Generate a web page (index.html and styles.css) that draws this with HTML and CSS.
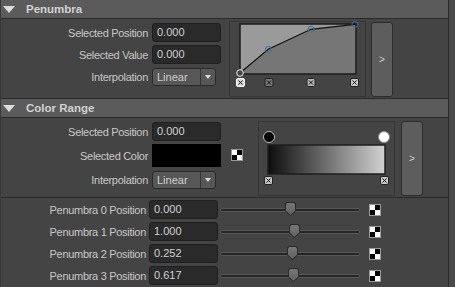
FILE: index.html
```html
<!DOCTYPE html>
<html lang="en">
<head>
    <meta charset="UTF-8">
    <title>Penumbra</title>
    <link rel="stylesheet" href="styles.css">
</head>
<body>
<div class="panel">
    <div class="sec-head"><span class="tri"></span>Penumbra</div>
    <div class="sec-body">
        <div class="fields">
            <div class="row"><span class="label">Selected Position</span><span class="field">0.000</span></div>
            <div class="row"><span class="label">Selected Value</span><span class="field">0.000</span></div>
            <div class="row"><span class="label">Interpolation</span><span class="combo">Linear<span class="arrow"></span></span></div>
        </div>
        <div class="frame frame-curve">
            <svg width="137" height="76" viewBox="0 0 137 76">
                <rect x="0.5" y="0.5" width="136" height="75" fill="none" stroke="#363636"/>
                <rect x="11" y="3" width="116" height="50" fill="#767676"/>
                <polygon points="11,3 11,52 39.3,28.3 82,8.3 126,3.3 126,3" fill="#9a9a9a"/>
                <rect x="11" y="3" width="116" height="50" fill="none" stroke="#1c1c1c" stroke-width="1.5"/>
                <polyline points="11,52 39.3,28.3 82,8.3 126,3.3" fill="none" stroke="#111" stroke-width="1.2"/>
                <circle cx="11" cy="52" r="3.3" fill="#444" stroke="#eee"/>
                <circle cx="39.3" cy="28.3" r="3" fill="none" stroke="#3e6d9c"/>
                <circle cx="82" cy="8.3" r="3" fill="none" stroke="#3e6d9c"/>
                <circle cx="126" cy="3.3" r="3" fill="none" stroke="#3e6d9c"/>
                <g stroke-width="1">
                    <rect x="7.5" y="57.5" width="8" height="8" rx="1.5" fill="#d8d8d8" stroke="#fff"/>
                    <path d="M9.5 59.5l4 4M13.5 59.5l-4 4" stroke="#111"/>
                    <rect x="36" y="57.5" width="8" height="8" rx="1.5" fill="#777" stroke="#222"/>
                    <path d="M38 59.5l4 4M42 59.5l-4 4" stroke="#111"/>
                    <rect x="78" y="57.5" width="8" height="8" rx="1.5" fill="#b5b5b5" stroke="#222"/>
                    <path d="M80 59.5l4 4M84 59.5l-4 4" stroke="#111"/>
                    <rect x="121.5" y="57.5" width="8" height="8" rx="1.5" fill="#c8c8c8" stroke="#222"/>
                    <path d="M123.5 59.5l4 4M127.5 59.5l-4 4" stroke="#111"/>
                </g>
            </svg>
        </div>
        <div class="more more-curve">&gt;</div>
    </div>

    <div class="sec-head"><span class="tri"></span>Color Range</div>
    <div class="sec-body">
        <div class="fields">
            <div class="row"><span class="label">Selected Position</span><span class="field">0.000</span></div>
            <div class="row row-tall"><span class="label">Selected Color</span><span class="swatch"></span><span class="checker checker-color"></span></div>
            <div class="row"><span class="label">Interpolation</span><span class="combo">Linear<span class="arrow"></span></span></div>
        </div>
        <div class="frame frame-ramp">
            <svg width="137" height="75" viewBox="0 0 137 75">
                <defs>
                    <linearGradient id="ramp" x1="0" x2="1" y1="0" y2="0">
                        <stop offset="0" stop-color="#0d0d0d"/>
                        <stop offset="1" stop-color="#d2d2d2"/>
                    </linearGradient>
                </defs>
                <rect x="0.5" y="0.5" width="136" height="74" fill="none" stroke="#363636"/>
                <circle cx="11" cy="16" r="5.5" fill="#000" stroke="#bdbdbd"/>
                <circle cx="126" cy="16" r="5.5" fill="#fff" stroke="#8a8a8a"/>
                <rect x="10" y="24" width="117" height="29" fill="url(#ramp)" stroke="#1e1e1e" stroke-width="1.5"/>
                <rect x="6.5" y="55.5" width="8" height="8" rx="1.5" fill="#c8c8c8" stroke="#222"/>
                <path d="M8.5 57.5l4 4M12.5 57.5l-4 4" stroke="#111"/>
                <rect x="122.5" y="55.5" width="8" height="8" rx="1.5" fill="#c8c8c8" stroke="#222"/>
                <path d="M124.5 57.5l4 4M128.5 57.5l-4 4" stroke="#111"/>
            </svg>
        </div>
        <div class="more more-ramp">&gt;</div>
    </div>

    <div class="positions">
        <div class="prow"><span class="plabel">Penumbra 0 Position</span><span class="field pfield">0.000</span><span class="slider"><span class="track"></span><span class="thumb" style="left: 65px"></span></span><span class="checker"></span></div>
        <div class="prow"><span class="plabel">Penumbra 1 Position</span><span class="field pfield">1.000</span><span class="slider"><span class="track"></span><span class="thumb" style="left: 69px"></span></span><span class="checker"></span></div>
        <div class="prow"><span class="plabel">Penumbra 2 Position</span><span class="field pfield">0.252</span><span class="slider"><span class="track"></span><span class="thumb" style="left: 67px"></span></span><span class="checker"></span></div>
        <div class="prow"><span class="plabel">Penumbra 3 Position</span><span class="field pfield">0.617</span><span class="slider"><span class="track"></span><span class="thumb" style="left: 68px"></span></span><span class="checker"></span></div>
    </div>
</div>
</body>
</html>
```

FILE: styles.css
```css
body {
    margin: 0;
    background: #494949;
    font-family: "Liberation Sans", Arial, sans-serif;
    font-size: 11px;
    color: #c8c8c8;
    overflow: hidden;
}
.panel {
    width: 447px;
    height: 287px;
    background: #444;
    border-left: 1px solid #383838;
    border-right: 1px solid #2b2b2b;
}
.sec-head {
    height: 18px;
    background: #5b5b5b;
    border-bottom: 1px solid #2a2a2a;
    display: flex;
    align-items: center;
    font-weight: bold;
    font-size: 11.5px;
    color: #d2d2d2;
}
.tri {
    width: 0;
    height: 0;
    border-left: 6px solid transparent;
    border-right: 6px solid transparent;
    border-top: 7px solid #dcdcdc;
    margin: 0 11px 0 2px;
}
.sec-body {
    height: 79px;
    border-bottom: 1px solid #2a2a2a;
    display: flex;
    align-items: flex-start;
}
.fields {
    padding-top: 4px;
}
.row {
    display: flex;
    align-items: center;
    height: 19px;
    margin-bottom: 3px;
}
.row-tall {
    height: 23px;
}
.label {
    width: 147px;
    margin-right: 4px;
    text-align: right;
    letter-spacing: -0.3px;
}
.field {
    box-sizing: border-box;
    width: 69px;
    height: 19px;
    line-height: 17px;
    padding-left: 4px;
    background: #2a2a2a;
    border: 1px solid #202020;
    border-radius: 3px;
    color: #d2d2d2;
}
.swatch {
    width: 69px;
    height: 23px;
    background: #000;
}
.combo {
    position: relative;
    box-sizing: border-box;
    width: 64px;
    height: 18px;
    line-height: 16px;
    padding-left: 4px;
    background: #575757;
    border: 1px solid #2a2a2a;
    border-radius: 3px;
    color: #d0d0d0;
}
.arrow {
    position: absolute;
    right: 0;
    top: 0;
    width: 14px;
    height: 16px;
    border-left: 1px solid #333;
}
.arrow::after {
    content: "";
    position: absolute;
    left: 4px;
    top: 6px;
    border-left: 3.5px solid transparent;
    border-right: 3.5px solid transparent;
    border-top: 4px solid #dcdcdc;
}
.checker {
    width: 10px;
    height: 10px;
    border: 1px solid #9a9a9a;
    background: conic-gradient(#000 0 25%, #fff 0 50%, #000 0 75%, #fff 0);
    flex: none;
}
.checker-color {
    margin-left: 10px;
    margin-top: -2px;
}
.frame {
    flex: none;
}
.frame svg {
    display: block;
}
.frame-curve {
    margin: 2px 0 0 8px;
}
.frame-ramp {
    margin: 3px 0 0 15px;
}
.more {
    box-sizing: border-box;
    width: 22px;
    display: flex;
    align-items: center;
    justify-content: center;
    background: #5d5d5d;
    border: 1px solid #2c2c2c;
    border-radius: 3px;
    color: #cfcfcf;
    font-size: 10px;
}
.more-curve {
    height: 75px;
    margin: 3px 0 0 5px;
}
.more-ramp {
    height: 75px;
    margin: 3px 0 0 6px;
}
.positions {
    padding-top: 2px;
}
.prow {
    display: flex;
    align-items: center;
    height: 19px;
    margin-bottom: 3px;
}
.plabel {
    width: 145px;
    margin-right: 3px;
    text-align: right;
    letter-spacing: -0.3px;
}
.slider {
    position: relative;
    width: 140px;
    height: 19px;
    margin-left: 2px;
    margin-right: 9px;
    display: flex;
    align-items: center;
}
.track {
    box-sizing: border-box;
    width: 100%;
    height: 4px;
    background: #262626;
    border: 1px solid #585858;
    border-radius: 2px;
}
.thumb {
    position: absolute;
    top: 2px;
    width: 11px;
    height: 14px;
    background: #2a2a2a;
    clip-path: polygon(15% 0, 85% 0, 100% 12%, 100% 65%, 50% 100%, 0 65%, 0 12%);
}
.thumb::after {
    content: "";
    position: absolute;
    inset: 1px;
    background: linear-gradient(#777, #626262);
    clip-path: polygon(15% 0, 85% 0, 100% 12%, 100% 65%, 50% 100%, 0 65%, 0 12%);
}
```
